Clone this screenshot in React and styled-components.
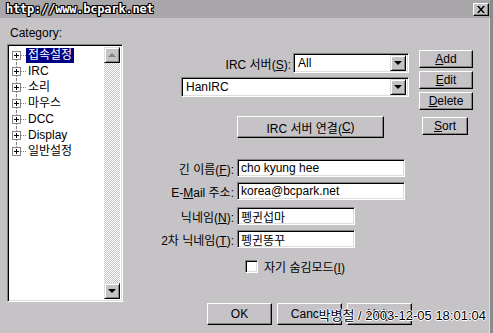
import React from "react";
import styled, { createGlobalStyle } from "styled-components";

const GlobalStyle = createGlobalStyle`
  html, body {
    margin: 0;
    padding: 0;
    background: #c6c3c6;
  }
  body {
    font-family: "Liberation Sans", "Noto Sans CJK KR", sans-serif;
    font-size: 12px;
    color: #000;
  }
`;

const categories = ["접속설정", "IRC", "소리", "마우스", "DCC", "Display", "일반설정"];

const fields = [
  { label: <>긴 이름(<u>F</u>):</>, value: "cho kyung hee", width: 168, top: 21 },
  { label: <>E-<u>M</u>ail 주소:</>, value: "korea@bcpark.net", width: 168, top: 5 },
  { label: <>닉네임(<u>N</u>):</>, value: "펭귄섭마", width: 118, top: 7 },
  { label: <>2차 닉네임(<u>T</u>):</>, value: "펭귄똥꾸", width: 118, top: 5 },
];

const App = () => {
  return (
    <>
      <GlobalStyle />
      <Window>
        <TitleBar>
          <TitleText>http://www.bcpark.net</TitleText>
          <CloseButton>
            <svg width="8" height="7" viewBox="0 0 8 7">
              <path d="M0 0h2l2 2.5L6 0h2L5 3.5 8 7H6L4 4.5 2 7H0l3-3.5z" fill="#000" />
            </svg>
          </CloseButton>
        </TitleBar>

        <Body>
          <LeftPane>
            <Caption>Category:</Caption>
            <TreeBox>
              <TreeList>
                {categories.map((name, i) => (
                  <TreeRow key={name}>
                    <Gutter $first={i === 0} $last={i === categories.length - 1}>
                      <PlusBox />
                    </Gutter>
                    <TreeLabel $selected={i === 0}>{name}</TreeLabel>
                  </TreeRow>
                ))}
              </TreeList>
              <ScrollBar>
                <ArrowButton>
                  <Arrow $up />
                </ArrowButton>
                <Track />
                <ArrowButton>
                  <Arrow />
                </ArrowButton>
              </ScrollBar>
            </TreeBox>
          </LeftPane>

          <RightPane>
            <TopArea>
              <FormColumn>
                <ServerRow>
                  <Label>IRC 서버(<u>S</u>):</Label>
                  <Combo $width={116}>
                    <ComboText>All</ComboText>
                    <DropButton>
                      <Arrow />
                    </DropButton>
                  </Combo>
                </ServerRow>
                <ServerRow $top={4}>
                  <Combo $width={228}>
                    <ComboText>HanIRC</ComboText>
                    <DropButton>
                      <Arrow />
                    </DropButton>
                  </Combo>
                </ServerRow>
                <ConnectButton>
                  IRC 서버 연결(<u>C</u>)
                </ConnectButton>
              </FormColumn>

              <SideButtons>
                <SideButton>
                  <u>A</u>dd
                </SideButton>
                <SideButton>
                  <u>E</u>dit
                </SideButton>
                <SideButton>
                  <u>D</u>elete
                </SideButton>
                <SideButton $narrow>
                  <u>S</u>ort
                </SideButton>
              </SideButtons>
            </TopArea>

            {fields.map((f, i) => (
              <FieldRow key={i} $top={f.top}>
                <FieldLabel>{f.label}</FieldLabel>
                <TextBox $width={f.width}>{f.value}</TextBox>
              </FieldRow>
            ))}

            <CheckRow>
              <CheckBox />
              <span>자기 숨김모드(<u>I</u>)</span>
            </CheckRow>

            <BottomButtons>
              <DialogButton>OK</DialogButton>
              <DialogButton>Cancel</DialogButton>
              <DialogButton>Help</DialogButton>
            </BottomButtons>
          </RightPane>
        </Body>

        <Stamp>박병철 / 2003-12-05 18:01:04</Stamp>
      </Window>
    </>
  );
};

export default App;

// Styles

const Window = styled.div`
  position: relative;
  width: 493px;
  height: 333px;
  background: #c6c3c6;
  box-sizing: border-box;
  border-right: 3px solid #8c8a8c;
  box-shadow: inset -1px 0 0 #dedede;
  overflow: hidden;
`;

const TitleBar = styled.div`
  display: flex;
  align-items: center;
  justify-content: space-between;
  height: 18px;
  padding: 0 1px 0 6px;
  background: #a8a6a8;
`;

const TitleText = styled.div`
  font-family: "DejaVu Sans Mono", monospace;
  font-weight: bold;
  font-size: 12px;
  letter-spacing: -0.2px;
  color: #fff;
  text-shadow: 1px 0 0 #000, -1px 0 0 #000, 0 1px 0 #000, 0 -1px 0 #000,
    1px 1px 0 #000, -1px -1px 0 #000, 1px -1px 0 #000, -1px 1px 0 #000;
`;

const CloseButton = styled.div`
  display: flex;
  align-items: center;
  justify-content: center;
  width: 16px;
  height: 13px;
  box-sizing: border-box;
  background: #c6c3c6;
  border: 1px solid;
  border-color: #fff #000 #000 #fff;
  box-shadow: inset -1px -1px 0 #848284;
`;

const Body = styled.div`
  display: flex;
  padding-left: 7px;
`;

const LeftPane = styled.div`
  display: flex;
  flex-direction: column;
  width: 116px;
`;

const Caption = styled.div`
  height: 26px;
  padding-top: 8px;
  padding-left: 3px;
  box-sizing: border-box;
  line-height: 14px;
`;

const TreeBox = styled.div`
  display: flex;
  height: 258px;
  box-sizing: border-box;
  border: 1px solid;
  border-color: #848284 #fff #fff #848284;
  box-shadow: inset 1px 1px 0 #000, inset -1px -1px 0 #dedede;
  background: #fff;
  padding: 2px 2px 2px 2px;
`;

const TreeList = styled.div`
  flex: 1;
  display: flex;
  flex-direction: column;
  padding-top: 0;
`;

const TreeRow = styled.div`
  display: flex;
  align-items: center;
  height: 16px;
`;

const Gutter = styled.div`
  position: relative;
  width: 14px;
  height: 16px;
  flex: none;

  &::before {
    content: "";
    position: absolute;
    left: 6px;
    top: ${(p) => (p.$first ? "8px" : "0")};
    bottom: ${(p) => (p.$last ? "8px" : "0")};
    border-left: 1px dotted #848284;
  }
  &::after {
    content: "";
    position: absolute;
    left: 6px;
    right: -2px;
    top: 8px;
    border-top: 1px dotted #848284;
  }
`;

const PlusBox = styled.span`
  position: absolute;
  left: 2px;
  top: 4px;
  width: 9px;
  height: 9px;
  box-sizing: border-box;
  border: 1px solid #848284;
  background: #fff;
  z-index: 1;

  &::before {
    content: "";
    position: absolute;
    left: 1px;
    top: 3px;
    width: 5px;
    height: 1px;
    background: #000;
  }
  &::after {
    content: "";
    position: absolute;
    left: 3px;
    top: 1px;
    width: 1px;
    height: 5px;
    background: #000;
  }
`;

const TreeLabel = styled.span`
  margin-left: 2px;
  padding: 0 2px;
  height: 15px;
  line-height: 15px;
  font-size: 12px;
  background: ${(p) => (p.$selected ? "#000084" : "transparent")};
  color: ${(p) => (p.$selected ? "#fff" : "#000")};
`;

const ScrollBar = styled.div`
  display: flex;
  flex-direction: column;
  width: 16px;
  margin: -2px -2px -2px 0;
  padding: 2px 2px 2px 0;
`;

const ArrowButton = styled.div`
  display: flex;
  align-items: center;
  justify-content: center;
  width: 16px;
  height: 16px;
  box-sizing: border-box;
  background: #c6c3c6;
  border: 1px solid;
  border-color: #dedede #000 #000 #dedede;
  box-shadow: inset 1px 1px 0 #fff, inset -1px -1px 0 #848284;
`;

const Track = styled.div`
  flex: 1;
  background: repeating-conic-gradient(#fff 0 25%, #c6c3c6 0 50%) 0 0 / 2px 2px;
`;

const Arrow = styled.span`
  width: 0;
  height: 0;
  border-left: 4px solid transparent;
  border-right: 4px solid transparent;
  ${(p) =>
    p.$up
      ? "border-bottom: 4px solid #848284;"
      : "border-top: 4px solid #000;"}
`;

const RightPane = styled.div`
  display: flex;
  flex-direction: column;
  flex: 1;
`;

const TopArea = styled.div`
  display: flex;
`;

const FormColumn = styled.div`
  display: flex;
  flex-direction: column;
  width: 286px;
  padding-top: 35px;
`;

const ServerRow = styled.div`
  display: flex;
  align-items: center;
  justify-content: flex-end;
  gap: 2px;
  margin-top: ${(p) => p.$top || 0}px;
  height: 20px;
`;

const Label = styled.span`
  white-space: nowrap;
`;

const Combo = styled.div`
  display: flex;
  align-items: center;
  width: ${(p) => p.$width}px;
  height: 20px;
  box-sizing: border-box;
  background: #fff;
  border: 1px solid;
  border-color: #848284 #fff #fff #848284;
  box-shadow: inset 1px 1px 0 #000, inset -1px -1px 0 #dedede;
  padding: 2px;
`;

const ComboText = styled.span`
  flex: 1;
  padding-left: 2px;
  font-size: 12px;
`;

const DropButton = styled(ArrowButton)`
  height: 16px;
`;

const RaisedButton = styled.div`
  display: flex;
  align-items: center;
  justify-content: center;
  box-sizing: border-box;
  background: #c6c3c6;
  border: 1px solid;
  border-color: #fff #000 #000 #fff;
  box-shadow: inset -1px -1px 0 #848284;
  font-size: 12px;
  white-space: nowrap;
`;

const ConnectButton = styled(RaisedButton)`
  width: 147px;
  height: 22px;
  margin-top: 19px;
  margin-left: 114px;
`;

const SideButtons = styled.div`
  display: flex;
  flex-direction: column;
  gap: 3px;
  margin-left: 10px;
  padding-top: 32px;
`;

const SideButton = styled(RaisedButton)`
  width: ${(p) => (p.$narrow ? 46 : 54)}px;
  height: 18px;
  margin-left: ${(p) => (p.$narrow ? 3 : 0)}px;
  margin-top: ${(p) => (p.$narrow ? 4 : 0)}px;
`;

const FieldRow = styled.div`
  display: flex;
  align-items: center;
  margin-top: ${(p) => p.$top}px;
  height: 18px;
`;

const FieldLabel = styled.span`
  width: 114px;
  padding-right: 3px;
  box-sizing: border-box;
  text-align: right;
  white-space: nowrap;
`;

const TextBox = styled.div`
  display: flex;
  align-items: center;
  width: ${(p) => p.$width}px;
  height: 18px;
  box-sizing: border-box;
  background: #fff;
  border: 1px solid;
  border-color: #848284 #fff #fff #848284;
  box-shadow: inset 1px 1px 0 #000, inset -1px -1px 0 #dedede;
  padding-left: 3px;
  font-size: 12px;
  white-space: nowrap;
`;

const CheckRow = styled.div`
  display: flex;
  align-items: center;
  gap: 6px;
  margin-top: 12px;
  margin-left: 122px;
  height: 13px;
`;

const CheckBox = styled.span`
  width: 13px;
  height: 13px;
  box-sizing: border-box;
  background: #fff;
  border: 1px solid;
  border-color: #848284 #fff #fff #848284;
  box-shadow: inset 1px 1px 0 #000, inset -1px -1px 0 #dedede;
`;

const BottomButtons = styled.div`
  display: flex;
  gap: 5px;
  margin-top: 30px;
  margin-left: 84px;
`;

const DialogButton = styled(RaisedButton)`
  width: 65px;
  height: 22px;
`;

const Stamp = styled.div`
  position: absolute;
  right: 4px;
  bottom: 9px;
  font-size: 13px;
  color: #000;
  white-space: nowrap;
  text-shadow: 1px 0 0 #fff, -1px 0 0 #fff, 0 1px 0 #fff, 0 -1px 0 #fff;
`;
